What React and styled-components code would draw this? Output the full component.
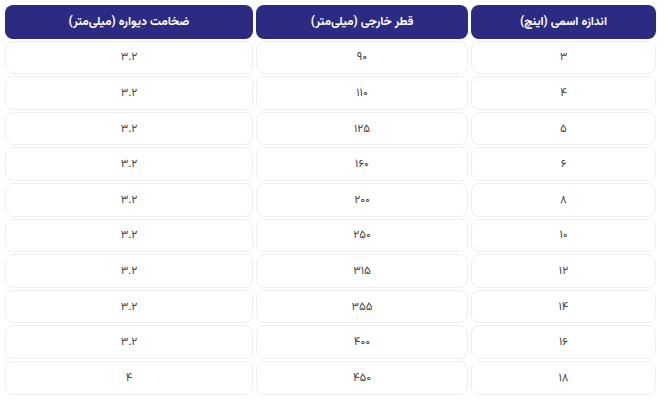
import React from 'react'
import styled, { createGlobalStyle } from 'styled-components'

const GlobalStyle = createGlobalStyle`
    body {
        margin: 0;
        background: #ffffff;
        font-family: "Vazirmatn", "Noto Sans Arabic", "DejaVu Sans", sans-serif;
    }
`

const rows = [
    ['۳', '۹۰', '۳.۲'],
    ['۴', '۱۱۰', '۳.۲'],
    ['۵', '۱۲۵', '۳.۲'],
    ['۶', '۱۶۰', '۳.۲'],
    ['۸', '۲۰۰', '۳.۲'],
    ['۱۰', '۲۵۰', '۳.۲'],
    ['۱۲', '۳۱۵', '۳.۲'],
    ['۱۴', '۳۵۵', '۳.۲'],
    ['۱۶', '۴۰۰', '۳.۲'],
    ['۱۸', '۴۵۰', '۴'],
]

export default function App() {
    return (
        <>
            <GlobalStyle />
            <Wrapper lang="fa" dir="rtl">
                <Table>
                    <colgroup>
                        <col style={{ width: 185 }} />
                        <col style={{ width: 212 }} />
                        <col style={{ width: 248 }} />
                    </colgroup>
                    <thead>
                        <tr>
                            <HeadCell>اندازه اسمی (اینچ)</HeadCell>
                            <HeadCell>قطر خارجی (میلی‌متر)</HeadCell>
                            <HeadCell>ضخامت دیواره (میلی‌متر)</HeadCell>
                        </tr>
                    </thead>
                    <tbody>
                        {rows.map((r, i) => (
                            <tr key={i}>
                                {r.map((v, j) => (
                                    <Cell key={j}>{v}</Cell>
                                ))}
                            </tr>
                        ))}
                    </tbody>
                </Table>
            </Wrapper>
        </>
    )
}

const Wrapper = styled.div`
    padding: 3px 5px 0 2px;
`
const Table = styled.table`
    border-collapse: separate;
    border-spacing: 3px 2px;
    table-layout: fixed;
    width: 657px;
`
const HeadCell = styled.th`
    height: 33.6px;
    padding: 0 8px;
    background: #2c2b82;
    color: #ffffff;
    font-size: 12px;
    font-weight: bold;
    text-align: center;
    border-radius: 8px;
    box-sizing: border-box;
`
const Cell = styled.td`
    height: 33.6px;
    padding: 0 8px;
    background: #ffffff;
    color: #444444;
    font-size: 11.5px;
    text-align: center;
    border: 1px solid #eeeeee;
    border-radius: 8px;
    box-sizing: border-box;
`
